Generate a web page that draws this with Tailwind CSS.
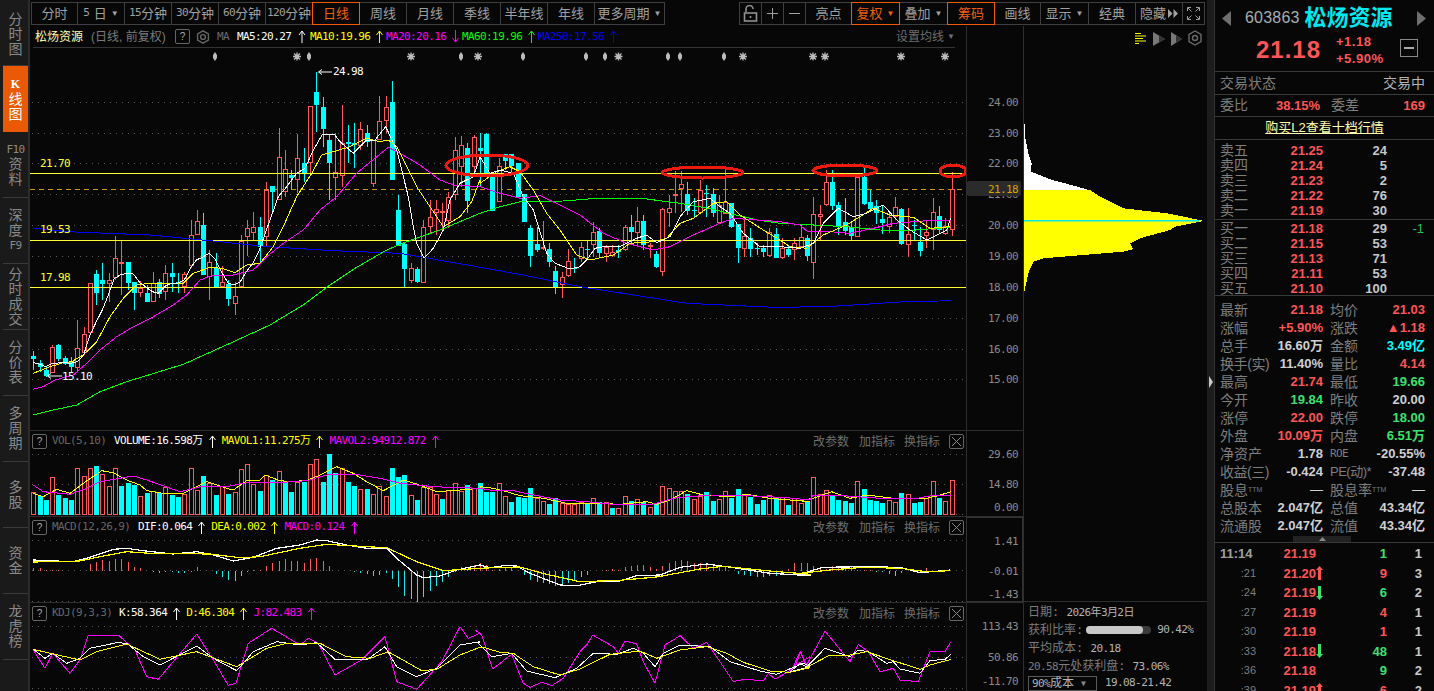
<!DOCTYPE html>
<html lang="zh">
<head>
<meta charset="utf-8">
<script src="https://cdn.jsdelivr.net/npm/@tailwindcss/browser@4"></script>
<title>松炀资源</title>
</head>
<body class="bg-[#070707]">
<div class="flex w-[1434px] h-[691px] overflow-hidden bg-[#070707] text-[#999] font-['Liberation_Sans','Noto_Sans_CJK_SC',sans-serif]">

  <!-- left tab rail -->
  <nav class="w-[30px] flex-none bg-[#1a1a1a] border-r-2 border-[#2c2c2c] pl-[3px] pt-[3px] flex flex-col text-[14px] leading-[15px] text-[#8a8a8a] text-center">
    <div class="h-[63px] w-[25px] border-b border-[#3a3a3a] flex flex-col justify-center"><span>分</span><span>时</span><span>图</span></div>
    <div class="h-[66px] w-[25px] bg-[#ea5a04] text-white flex flex-col justify-center"><span class="text-[12px] font-bold font-['Liberation_Serif']">K</span><span>线</span><span>图</span></div>
    <div class="h-[66px] w-[25px] border-b border-[#3a3a3a] flex flex-col justify-center"><span class="font-['DejaVu_Sans_Mono'] text-[11px] tracking-[-0.6px]">F10</span><span>资</span><span>料</span></div>
    <div class="h-[66px] w-[25px] border-b border-[#3a3a3a] flex flex-col justify-center"><span>深</span><span>度</span><span class="font-['DejaVu_Sans_Mono'] text-[11px] tracking-[-0.6px]">F9</span></div>
    <div class="h-[66px] w-[25px] border-b border-[#3a3a3a] flex flex-col justify-center"><span>分</span><span>时</span><span>成</span><span>交</span></div>
    <div class="h-[66px] w-[25px] border-b border-[#3a3a3a] flex flex-col justify-center"><span>分</span><span>价</span><span>表</span></div>
    <div class="h-[66px] w-[25px] border-b border-[#3a3a3a] flex flex-col justify-center"><span>多</span><span>周</span><span>期</span></div>
    <div class="h-[66px] w-[25px] border-b border-[#3a3a3a] flex flex-col justify-center"><span>多</span><span>股</span></div>
    <div class="h-[66px] w-[25px] border-b border-[#3a3a3a] flex flex-col justify-center"><span>资</span><span>金</span></div>
    <div class="h-[66px] w-[25px] border-b border-[#3a3a3a] flex flex-col justify-center"><span>龙</span><span>虎</span><span>榜</span></div>
  </nav>

  <!-- centre -->
  <main class="w-[1177px] flex-none flex flex-col">
    <!-- toolbar -->
    <div class="h-[26px] flex-none flex items-start pt-[2px] text-[13px] text-[#a0a0a0] pl-[1px] whitespace-nowrap">
      <div class="flex">
        <div class="w-[47px] h-[23px] border border-[#3f3f3f] flex items-center justify-center">分时</div>
        <div class="w-[48px] h-[23px] border border-[#3f3f3f] -ml-px flex items-center justify-center gap-[4px]"><span class="font-['DejaVu_Sans_Mono'] text-[11px]">5</span>日<span class="text-[8px]">▼</span></div>
        <div class="w-[48px] h-[23px] border border-[#3f3f3f] -ml-px flex items-center justify-center"><span class="font-['DejaVu_Sans_Mono'] text-[11px] tracking-[-0.6px]">15</span>分钟</div>
        <div class="w-[48px] h-[23px] border border-[#3f3f3f] -ml-px flex items-center justify-center"><span class="font-['DejaVu_Sans_Mono'] text-[11px] tracking-[-0.6px]">30</span>分钟</div>
        <div class="w-[48px] h-[23px] border border-[#3f3f3f] -ml-px flex items-center justify-center"><span class="font-['DejaVu_Sans_Mono'] text-[11px] tracking-[-0.6px]">60</span>分钟</div>
        <div class="w-[48px] h-[23px] border border-[#3f3f3f] -ml-px flex items-center justify-center"><span class="font-['DejaVu_Sans_Mono'] text-[11px] tracking-[-0.6px]">120</span>分钟</div>
        <div class="w-[48px] h-[23px] border border-[#f05a08] -ml-px relative flex items-center justify-center text-[#f0600c]">日线</div>
        <div class="w-[48px] h-[23px] border border-[#3f3f3f] -ml-px flex items-center justify-center">周线</div>
        <div class="w-[48px] h-[23px] border border-[#3f3f3f] -ml-px flex items-center justify-center">月线</div>
        <div class="w-[48px] h-[23px] border border-[#3f3f3f] -ml-px flex items-center justify-center">季线</div>
        <div class="w-[48px] h-[23px] border border-[#3f3f3f] -ml-px flex items-center justify-center">半年线</div>
        <div class="w-[48px] h-[23px] border border-[#3f3f3f] -ml-px flex items-center justify-center">年线</div>
        <div class="w-[71px] h-[23px] border border-[#3f3f3f] -ml-px flex items-center justify-center gap-[4px]">更多周期<span class="text-[8px]">▼</span></div>
      </div>
      <div class="flex-1"></div>
      <div class="flex mr-[2px]">
        <div class="w-[23px] h-[23px] border border-[#3f3f3f] flex items-center justify-center"><svg width="15" height="17" viewBox="0 0 15 17" fill="none" stroke="#909090" stroke-width="1.6"><path d="M3 7V4a3.5 3.5 0 0 1 7 0"/><rect x="1.5" y="8" width="12" height="8"/><path d="M7.5 11v2"/></svg></div>
        <div class="w-[23px] h-[23px] border border-[#3f3f3f] -ml-px flex items-center justify-center"><svg width="11" height="11" stroke="#a0a0a0"><path d="M0 5.5h11M5.5 0v11"/></svg></div>
        <div class="w-[23px] h-[23px] border border-[#3f3f3f] -ml-px flex items-center justify-center"><svg width="11" height="11" stroke="#a0a0a0"><path d="M0 5.5h11"/></svg></div>
        <div class="w-[47px] h-[23px] border border-[#3f3f3f] -ml-px flex items-center justify-center">亮点</div>
        <div class="w-[49px] h-[23px] border border-[#f05a08] -ml-px relative flex items-center justify-center gap-[4px] text-[#f0600c]">复权<span class="text-[8px]">▼</span></div>
        <div class="w-[49px] h-[23px] border border-[#3f3f3f] -ml-px flex items-center justify-center gap-[4px]">叠加<span class="text-[8px]">▼</span></div>
        <div class="w-[48px] h-[23px] border border-[#f05a08] -ml-px relative flex items-center justify-center text-[#f0600c]">筹码</div>
        <div class="w-[47px] h-[23px] border border-[#3f3f3f] -ml-px flex items-center justify-center">画线</div>
        <div class="w-[49px] h-[23px] border border-[#3f3f3f] -ml-px flex items-center justify-center gap-[4px]">显示<span class="text-[8px]">▼</span></div>
        <div class="w-[48px] h-[23px] border border-[#3f3f3f] -ml-px flex items-center justify-center">经典</div>
        <div class="w-[48px] h-[23px] border border-[#3f3f3f] -ml-px flex items-center justify-center gap-[2px]">隐藏<svg width="10" height="9" fill="#a0a0a0"><path d="M0 0l4.5 4.5L0 9zM5.5 0L10 4.5 5.5 9z"/></svg></div>
        <div class="w-[23px] h-[23px] border border-[#3f3f3f] -ml-px flex items-center justify-center"><svg width="13" height="13" fill="none" stroke="#a0a0a0"><path d="M.5 4V.5H4M9 .5h3.5V4M.5 9v3.5H4M12.5 9v3.5H9M1 1l3.5 3.5M12 1L8.5 4.5M1 12l3.5-3.5M12 12L8.5 8.5"/></svg></div>
      </div>
    </div>

    <div class="flex-1 flex min-h-0">
      <!-- chart column -->
      <div class="w-[993px] flex-none flex flex-col">
        <!-- main panel -->
        <section class="h-[404px] flex">
          <div class="w-[936px] flex-none flex flex-col">
            <div class="h-[22px] flex-none ml-[3px] mr-[11px] border-b border-[#333] flex items-center text-[12px] leading-[14px] whitespace-nowrap">
              <span class="ml-[2px] w-[56px] text-[#ffffb4]">松炀资源</span>
              <span class="w-[84px] text-[#7a7a7a]">(日线, 前复权)</span>
              <span class="w-[15px] h-[15px] border border-[#666] rounded-[2px] flex items-center justify-center text-[#aaa] text-[10px]">?</span>
              <svg class="ml-[6px]" width="14" height="14" viewBox="0 0 14 14" fill="none" stroke="#666" stroke-width="1.4"><path d="M7 .8l5.4 3.1v6.2L7 13.2 1.6 10.100V3.900z"/><circle cx="7" cy="7" r="2.400"/></svg>
              <div class="flex items-center font-['DejaVu_Sans_Mono','Noto_Sans_CJK_SC',monospace] text-[11px] tracking-[-0.6px]">
                <span class="ml-[7px] w-[20px] text-[#6a6a6a]">MA</span>
                <span class="w-[60px] text-white">MA5:20.27</span>
                <svg class="w-[10px] h-[13px] text-white" viewBox="0 0 7 13" fill="none" stroke="currentColor"><path d="M3.500 13V1M.5 5l3-4 3 4"/></svg>
                <span class="ml-[3px] w-[66px] text-[#ffff00]">MA10:19.96</span>
                <svg class="w-[7px] h-[13px] text-[#ffff00]" viewBox="0 0 7 13" fill="none" stroke="currentColor"><path d="M3.500 13V1M.5 5l3-4 3 4"/></svg>
                <span class="ml-[3px] w-[66px] text-[#ff00ff]">MA20:20.16</span>
                <svg class="w-[7px] h-[13px] text-[#ff00ff]" viewBox="0 0 7 13" fill="none" stroke="currentColor"><path d="M3.500 0v12M.5 8l3 4 3-4"/></svg>
                <span class="ml-[3px] w-[66px] text-[#00ff00]">MA60:19.96</span>
                <svg class="w-[7px] h-[13px] text-[#00ff00]" viewBox="0 0 7 13" fill="none" stroke="currentColor"><path d="M3.500 13V1M.5 5l3-4 3 4"/></svg>
                <span class="ml-[3px] w-[72px] text-[#0000ff]">MA250:17.56</span>
                <svg class="w-[7px] h-[13px] text-[#0000ff]" viewBox="0 0 7 13" fill="none" stroke="currentColor"><path d="M3.500 13V1M.5 5l3-4 3 4"/></svg>
              </div>
              <div class="flex-1"></div>
              <span class="text-[#6e6e6e]">设置均线</span><span class="ml-[3px] text-[8px] text-[#6e6e6e]">▼</span>
            </div>
            <svg id="main" class="w-[936px] h-[382px]" viewBox="30 48 936 382"></svg>
          </div>
          <div class="w-[57px] flex-none border-l border-[#2e2e2e]">
            <svg class="w-[56px] h-[404px] font-['DejaVu_Sans_Mono',monospace] text-[11px] tracking-[-0.6px]" viewBox="967 26 56 404" fill="#8a8a8a" text-anchor="end">
              <text x="1018" y="106">24.00</text><text x="1018" y="137">23.00</text><text x="1018" y="167">22.00</text>
              <text x="1018" y="198">21.00</text><text x="1018" y="229">20.00</text><text x="1018" y="260">19.00</text>
              <text x="1018" y="291">18.00</text><text x="1018" y="322">17.00</text><text x="1018" y="353">16.00</text><text x="1018" y="383">15.00</text>
              <rect x="967" y="181" width="54" height="15" rx="2" fill="#2b2b2b"/><text x="1018" y="193" fill="#d9a300">21.18</text>
            </svg>
          </div>
        </section>
        <!-- volume panel -->
        <section class="h-[86px] flex border-t border-[#2e2e2e]">
          <div class="w-[936px] flex-none flex flex-col">
            <div class="h-[21px] flex-none pl-[2px] pr-[2px] flex items-center text-[12px] whitespace-nowrap">
              <span class="w-[15px] h-[15px] border border-[#666] rounded-[2px] flex items-center justify-center text-[#aaa] text-[10px]">?</span>
              <div class="flex items-center font-['DejaVu_Sans_Mono','Noto_Sans_CJK_SC',monospace] text-[11px] tracking-[-0.6px]">
                <span class="ml-[5px] w-[62px] text-[#666]">VOL(5,10)</span>
                <span class="text-white">VOLUME:16.598万</span>
                <svg class="ml-[6px] w-[7px] h-[13px] text-white" viewBox="0 0 7 13" fill="none" stroke="currentColor"><path d="M3.500 13V1M.5 5l3-4 3 4"/></svg>
                <span class="ml-[6px] text-[#ffff00]">MAVOL1:11.275万</span>
                <svg class="ml-[6px] w-[7px] h-[13px] text-[#ffff00]" viewBox="0 0 7 13" fill="none" stroke="currentColor"><path d="M3.500 13V1M.5 5l3-4 3 4"/></svg>
                <span class="ml-[6px] text-[#ff00ff]">MAVOL2:94912.872</span>
                <svg class="ml-[6px] w-[7px] h-[13px] text-[#ff00ff]" viewBox="0 0 7 13" fill="none" stroke="currentColor"><path d="M3.500 13V1M.5 5l3-4 3 4"/></svg>
              </div>
              <div class="flex-1"></div>
              <span class="text-[#6e6e6e]">改参数</span><span class="ml-[10px] text-[#6e6e6e]">加指标</span><span class="ml-[9px] text-[#6e6e6e]">换指标</span>
              <span class="ml-[9px] w-[15px] h-[15px] border border-[#666] rounded-[2px] flex items-center justify-center"><svg width="9" height="9" stroke="#888"><path d="M0 0l9 9M9 0L0 9"/></svg></span>
            </div>
            <svg id="vol" class="w-[936px] h-[64px]" viewBox="30 452 936 64"></svg>
          </div>
          <div class="w-[57px] flex-none border-l border-[#2e2e2e]">
            <svg class="w-[56px] h-[85px] font-['DejaVu_Sans_Mono',monospace] text-[11px] tracking-[-0.6px]" viewBox="967 431 56 85" fill="#8a8a8a" text-anchor="end">
              <text x="1018" y="458">29.60</text><text x="1018" y="488">14.80</text><text x="1018" y="511">0.00</text>
            </svg>
          </div>
        </section>
        <!-- macd panel -->
        <section class="h-[86px] flex border-t border-[#2e2e2e]">
          <div class="w-[936px] flex-none flex flex-col">
            <div class="h-[21px] flex-none pl-[2px] pr-[2px] flex items-center text-[12px] whitespace-nowrap">
              <span class="w-[15px] h-[15px] border border-[#666] rounded-[2px] flex items-center justify-center text-[#aaa] text-[10px]">?</span>
              <div class="flex items-center font-['DejaVu_Sans_Mono','Noto_Sans_CJK_SC',monospace] text-[11px] tracking-[-0.6px]">
                <span class="ml-[5px] w-[86px] text-[#666]">MACD(12,26,9)</span>
                <span class="text-white">DIF:0.064</span>
                <svg class="ml-[6px] w-[7px] h-[13px] text-white" viewBox="0 0 7 13" fill="none" stroke="currentColor"><path d="M3.500 13V1M.5 5l3-4 3 4"/></svg>
                <span class="ml-[6px] text-[#ffff00]">DEA:0.002</span>
                <svg class="ml-[6px] w-[7px] h-[13px] text-[#ffff00]" viewBox="0 0 7 13" fill="none" stroke="currentColor"><path d="M3.500 13V1M.5 5l3-4 3 4"/></svg>
                <span class="ml-[6px] text-[#ff00ff]">MACD:0.124</span>
                <svg class="ml-[6px] w-[7px] h-[13px] text-[#ff00ff]" viewBox="0 0 7 13" fill="none" stroke="currentColor"><path d="M3.500 13V1M.5 5l3-4 3 4"/></svg>
              </div>
              <div class="flex-1"></div>
              <span class="text-[#6e6e6e]">改参数</span><span class="ml-[10px] text-[#6e6e6e]">加指标</span><span class="ml-[9px] text-[#6e6e6e]">换指标</span>
              <span class="ml-[9px] w-[15px] h-[15px] border border-[#666] rounded-[2px] flex items-center justify-center"><svg width="9" height="9" stroke="#888"><path d="M0 0l9 9M9 0L0 9"/></svg></span>
            </div>
            <svg id="macd" class="w-[936px] h-[64px]" viewBox="30 538 936 64"></svg>
          </div>
          <div class="w-[57px] flex-none border border-[#333]">
            <svg class="w-[55px] h-[84px] font-['DejaVu_Sans_Mono',monospace] text-[11px] tracking-[-0.6px]" viewBox="967 517 55 84" fill="#8a8a8a" text-anchor="end">
              <text x="1018" y="544">1.41</text><text x="1018" y="574">-0.01</text><text x="1018" y="597">-1.43</text>
            </svg>
          </div>
        </section>
        <!-- kdj panel -->
        <section class="flex-1 flex border-t border-[#2e2e2e]">
          <div class="w-[936px] flex-none flex flex-col">
            <div class="h-[21px] flex-none pl-[2px] pr-[2px] flex items-center text-[12px] whitespace-nowrap">
              <span class="w-[15px] h-[15px] border border-[#666] rounded-[2px] flex items-center justify-center text-[#aaa] text-[10px]">?</span>
              <div class="flex items-center font-['DejaVu_Sans_Mono','Noto_Sans_CJK_SC',monospace] text-[11px] tracking-[-0.6px]">
                <span class="ml-[5px] w-[67px] text-[#666]">KDJ(9,3,3)</span>
                <span class="text-white">K:58.364</span>
                <svg class="ml-[6px] w-[7px] h-[13px] text-white" viewBox="0 0 7 13" fill="none" stroke="currentColor"><path d="M3.500 13V1M.5 5l3-4 3 4"/></svg>
                <span class="ml-[6px] text-[#ffff00]">D:46.304</span>
                <svg class="ml-[6px] w-[7px] h-[13px] text-[#ffff00]" viewBox="0 0 7 13" fill="none" stroke="currentColor"><path d="M3.500 13V1M.5 5l3-4 3 4"/></svg>
                <span class="ml-[6px] text-[#ff00ff]">J:82.483</span>
                <svg class="ml-[6px] w-[7px] h-[13px] text-[#ff00ff]" viewBox="0 0 7 13" fill="none" stroke="currentColor"><path d="M3.500 13V1M.5 5l3-4 3 4"/></svg>
              </div>
              <div class="flex-1"></div>
              <span class="text-[#6e6e6e]">改参数</span><span class="ml-[10px] text-[#6e6e6e]">加指标</span><span class="ml-[9px] text-[#6e6e6e]">换指标</span>
              <span class="ml-[9px] w-[15px] h-[15px] border border-[#666] rounded-[2px] flex items-center justify-center"><svg width="9" height="9" stroke="#888"><path d="M0 0l9 9M9 0L0 9"/></svg></span>
            </div>
            <svg id="kdj" class="w-[936px] h-[67px]" viewBox="30 624 936 67"></svg>
          </div>
          <div class="w-[57px] flex-none border-l border-[#2e2e2e]">
            <svg class="w-[56px] h-[88px] font-['DejaVu_Sans_Mono',monospace] text-[11px] tracking-[-0.6px]" viewBox="967 603 56 88" fill="#8a8a8a" text-anchor="end">
              <text x="1018" y="630">113.43</text><text x="1018" y="661">50.86</text><text x="1018" y="685">-11.70</text>
            </svg>
          </div>
        </section>
      </div>
      <!-- chip column -->
      <div class="w-[184px] flex-none flex flex-col border-l border-[#2e2e2e]">
        <svg id="chip" class="w-[183px] h-[575px]" viewBox="1024 26 183 575"></svg>
        <div class="flex-1 border-t border-[#2e2e2e] pl-[4px] pt-[1px] text-[12px] leading-[18px] text-[#7c7c7c] font-['DejaVu_Sans_Mono','Noto_Sans_CJK_SC',monospace]">
          <div class="h-[18px]">日期: <span class="text-[#b4b4b4] tracking-[-0.6px] text-[11px]">2026年3月2日</span></div>
          <div class="h-[18px] flex items-center">获利比率:
            <span class="ml-[3px] w-[65px] h-[8px] rounded-full bg-[#3a3a3a] flex"><span class="w-[57px] h-[8px] rounded-full bg-[#c8c8c8]"></span></span>
            <span class="ml-[6px] text-[#b4b4b4] tracking-[-0.6px] text-[11px]">90.42%</span></div>
          <div class="h-[18px]">平均成本: <span class="text-[#b4b4b4] tracking-[-0.6px] text-[11px]">20.18</span></div>
          <div class="h-[18px]"><span class="tracking-[-0.6px] text-[11px]">20.58</span>元处获利盘: <span class="text-[#b4b4b4] tracking-[-0.6px] text-[11px]">73.06%</span></div>
          <div class="h-[16px] flex items-center">
            <span class="w-[69px] h-[15px] border border-[#5a5a5a] flex items-center pl-[3px] text-[#b4b4b4] leading-[13px]"><span class="tracking-[-0.6px] text-[11px]">90%</span>成本<span class="ml-[7px] text-[8px] text-[#888]">▼</span></span>
            <span class="ml-[8px] text-[#b4b4b4] tracking-[-0.6px] text-[11px]">19.08-21.42</span>
          </div>
        </div>
      </div>
    </div>
  </main>

  <!-- splitter -->
  <div class="w-[7px] flex-none bg-[#1c1c1c] relative">
    <svg class="absolute left-[1px] top-[376px]" width="5" height="12" fill="#c8c8c8"><path d="M1 0l4 6-4 6z"/></svg>
  </div>

  <!-- right quote panel -->
  <aside class="w-[220px] flex-none border-l border-[#333] flex flex-col text-[14px] text-[#7e7e7e] font-['Liberation_Sans','Noto_Sans_CJK_SC',sans-serif]">
    <div class="h-[72px] flex-none border-b border-[#3a3a3a] flex flex-col">
      <div class="h-[36px] flex items-center pl-[7px] pr-[8px]">
        <svg width="9" height="15" fill="#6e6e6e"><path d="M9 0v15L0 7.500z"/></svg>
        <span class="ml-[14px] text-[16px] tracking-[0.2px] text-[#a5aeb0]">603863</span>
        <span class="ml-[5px] text-[22px] leading-[24px] font-bold text-[#00e8f0]">松炀资源</span>
        <div class="flex-1"></div>
        <svg width="9" height="15" fill="#6e6e6e"><path d="M0 0v15l9-7.500z"/></svg>
      </div>
      <div class="flex items-start">
        <span class="ml-[41px] w-[80px] text-[24px] leading-[28px] font-bold tracking-[1px] text-[#ff5555]">21.18</span>
        <div class="text-[13px] leading-[17px] font-bold tracking-[0.5px] text-[#ff5555] -mt-[3px]"><div>+1.18</div><div>+5.90%</div></div>
        <span class="ml-[17px] mt-[3px] w-[18px] h-[18px] border border-[#8a8a8a] flex items-center justify-center"><svg width="10" height="2" fill="#aaa"><rect width="10" height="2"/></svg></span>
      </div>
    </div>
    <div class="h-[23px] flex-none border-b border-[#3a3a3a] px-[5px] flex items-center justify-between"><span>交易状态</span><span class="text-[#b4b4b4] mr-[4px]">交易中</span></div>
    <div class="h-[22px] flex-none border-b border-[#3a3a3a] pl-[5px] pr-[9px] flex items-center"><span class="w-[56px]">委比</span><span class="w-[48px] text-[13px] font-bold text-[#ff5555]">38.15%</span><span class="ml-[7px]">委差</span><span class="flex-1 text-right text-[13px] font-bold text-[#ff5555]">169</span></div>
    <div class="h-[23px] flex-none border-b border-[#3a3a3a] flex items-center justify-center text-[13px] text-[#ffffb0] underline">购买L2查看十档行情</div>
    <div class="h-[80px] flex-none border-b border-[#3a3a3a] pt-[3px] pl-[5px] text-[13px] leading-[15px] font-bold">
      <div class="h-[15px] flex"><span class="w-[68px] text-[14px] font-normal">卖五</span><span class="w-[35px] text-right text-[#ff5555]">21.25</span><span class="w-[64px] text-right text-[#c8c8c8]">24</span></div>
      <div class="h-[15px] flex"><span class="w-[68px] text-[14px] font-normal">卖四</span><span class="w-[35px] text-right text-[#ff5555]">21.24</span><span class="w-[64px] text-right text-[#c8c8c8]">5</span></div>
      <div class="h-[15px] flex"><span class="w-[68px] text-[14px] font-normal">卖三</span><span class="w-[35px] text-right text-[#ff5555]">21.23</span><span class="w-[64px] text-right text-[#c8c8c8]">2</span></div>
      <div class="h-[15px] flex"><span class="w-[68px] text-[14px] font-normal">卖二</span><span class="w-[35px] text-right text-[#ff5555]">21.22</span><span class="w-[64px] text-right text-[#c8c8c8]">76</span></div>
      <div class="h-[15px] flex"><span class="w-[68px] text-[14px] font-normal">卖一</span><span class="w-[35px] text-right text-[#ff5555]">21.19</span><span class="w-[64px] text-right text-[#c8c8c8]">30</span></div>
    </div>
    <div class="h-[76px] flex-none border-b border-[#3a3a3a] pt-[1px] pl-[5px] text-[13px] leading-[15px] font-bold">
      <div class="h-[15px] flex"><span class="w-[68px] text-[14px] font-normal">买一</span><span class="w-[35px] text-right text-[#ff5555]">21.18</span><span class="w-[64px] text-right text-[#c8c8c8]">29</span><span class="w-[37px] text-right font-normal text-[#1ec85a]">-1</span></div>
      <div class="h-[15px] flex"><span class="w-[68px] text-[14px] font-normal">买二</span><span class="w-[35px] text-right text-[#ff5555]">21.15</span><span class="w-[64px] text-right text-[#c8c8c8]">53</span></div>
      <div class="h-[15px] flex"><span class="w-[68px] text-[14px] font-normal">买三</span><span class="w-[35px] text-right text-[#ff5555]">21.13</span><span class="w-[64px] text-right text-[#c8c8c8]">71</span></div>
      <div class="h-[15px] flex"><span class="w-[68px] text-[14px] font-normal">买四</span><span class="w-[35px] text-right text-[#ff5555]">21.11</span><span class="w-[64px] text-right text-[#c8c8c8]">53</span></div>
      <div class="h-[15px] flex"><span class="w-[68px] text-[14px] font-normal">买五</span><span class="w-[35px] text-right text-[#ff5555]">21.10</span><span class="w-[64px] text-right text-[#c8c8c8]">100</span></div>
    </div>
    <!-- stats -->
    <div class="h-[246px] flex-none pt-[5px] pl-[5px] text-[13px] font-bold leading-[18px]">
      <div class="h-[18px] flex"><div class="w-[103px] flex justify-between"><span class="text-[14px] font-normal">最新</span><span class="text-[#ff5555]">21.18</span></div><div class="w-[95px] ml-[7px] flex justify-between"><span class="text-[14px] font-normal">均价</span><span class="text-[#ff5555]">21.03</span></div></div>
      <div class="h-[18px] flex"><div class="w-[103px] flex justify-between"><span class="text-[14px] font-normal">涨幅</span><span class="text-[#ff5555]">+5.90%</span></div><div class="w-[95px] ml-[7px] flex justify-between"><span class="text-[14px] font-normal">涨跌</span><span class="text-[#ff5555]">▲1.18</span></div></div>
      <div class="h-[18px] flex"><div class="w-[103px] flex justify-between"><span class="text-[14px] font-normal">总手</span><span class="text-[#d0d0d0]">16.60万</span></div><div class="w-[95px] ml-[7px] flex justify-between"><span class="text-[14px] font-normal">金额</span><span class="text-[#00ffff]">3.49亿</span></div></div>
      <div class="h-[18px] flex"><div class="w-[103px] flex justify-between"><span class="text-[14px] font-normal whitespace-nowrap tracking-[-0.4px]">换手(实)</span><span class="text-[#d0d0d0] -ml-[6px]">11.40%</span></div><div class="w-[95px] ml-[7px] flex justify-between"><span class="text-[14px] font-normal">量比</span><span class="text-[#ff5555]">4.14</span></div></div>
      <div class="h-[18px] flex"><div class="w-[103px] flex justify-between"><span class="text-[14px] font-normal">最高</span><span class="text-[#ff5555]">21.74</span></div><div class="w-[95px] ml-[7px] flex justify-between"><span class="text-[14px] font-normal">最低</span><span class="text-[#3ee06e]">19.66</span></div></div>
      <div class="h-[18px] flex"><div class="w-[103px] flex justify-between"><span class="text-[14px] font-normal">今开</span><span class="text-[#3ee06e]">19.84</span></div><div class="w-[95px] ml-[7px] flex justify-between"><span class="text-[14px] font-normal">昨收</span><span class="text-[#d0d0d0]">20.00</span></div></div>
      <div class="h-[18px] flex"><div class="w-[103px] flex justify-between"><span class="text-[14px] font-normal">涨停</span><span class="text-[#ff5555]">22.00</span></div><div class="w-[95px] ml-[7px] flex justify-between"><span class="text-[14px] font-normal">跌停</span><span class="text-[#3ee06e]">18.00</span></div></div>
      <div class="h-[18px] flex"><div class="w-[103px] flex justify-between"><span class="text-[14px] font-normal">外盘</span><span class="text-[#ff5555]">10.09万</span></div><div class="w-[95px] ml-[7px] flex justify-between"><span class="text-[14px] font-normal">内盘</span><span class="text-[#3ee06e]">6.51万</span></div></div>
      <div class="h-[18px] flex"><div class="w-[103px] flex justify-between"><span class="text-[14px] font-normal">净资产</span><span class="text-[#d0d0d0]">1.78</span></div><div class="w-[95px] ml-[7px] flex justify-between"><span class="font-['DejaVu_Sans_Mono'] text-[11px] tracking-[-0.6px] font-normal">ROE</span><span class="text-[#d0d0d0]">-20.55%</span></div></div>
      <div class="h-[18px] flex"><div class="w-[103px] flex justify-between"><span class="text-[14px] font-normal tracking-[-0.5px] whitespace-nowrap">收益(三)</span><span class="text-[#d0d0d0]">-0.424</span></div><div class="w-[95px] ml-[7px] flex justify-between"><span class="text-[13px] font-normal tracking-[-0.5px] whitespace-nowrap">PE(动)*</span><span class="text-[#d0d0d0]">-37.48</span></div></div>
      <div class="h-[18px] flex"><div class="w-[103px] flex justify-between"><span class="text-[14px] font-normal">股息<sup class="text-[7px] text-[#6a7a80]">TTM</sup></span><span class="font-normal text-[#d0d0d0]">—</span></div><div class="w-[95px] ml-[7px] flex justify-between"><span class="text-[14px] font-normal">股息率<sup class="text-[7px] text-[#6a7a80]">TTM</sup></span><span class="font-normal text-[#d0d0d0]">—</span></div></div>
      <div class="h-[18px] flex"><div class="w-[103px] flex justify-between"><span class="text-[14px] font-normal">总股本</span><span class="text-[#d0d0d0]">2.047亿</span></div><div class="w-[95px] ml-[7px] flex justify-between"><span class="text-[14px] font-normal">总值</span><span class="text-[#d0d0d0]">43.34亿</span></div></div>
      <div class="h-[18px] flex"><div class="w-[103px] flex justify-between"><span class="text-[14px] font-normal">流通股</span><span class="text-[#d0d0d0]">2.047亿</span></div><div class="w-[95px] ml-[7px] flex justify-between"><span class="text-[14px] font-normal">流值</span><span class="text-[#d0d0d0]">43.34亿</span></div></div>
    </div>
    <!-- ticks -->
    <div class="flex-1 border-t border-[#3a3a3a] relative pt-[1px] pl-[5px] text-[13px] font-bold leading-[19.5px]">
      <div class="absolute left-[78px] -top-[7px] w-[58px] h-[6px] bg-[#222] flex items-center justify-center"><svg width="7" height="4" fill="#888"><path d="M3.500 0L7 4H0z"/></svg></div>
      <div class="h-[19.500px] flex"><span class="w-[36px] text-[#a0a0a0]">11:14</span><span class="w-[60px] text-right text-[#ff5555]">21.19</span><span class="w-[8px]"></span><span class="w-[63px] text-right text-[#3ee06e]">1</span><span class="w-[35px] text-right text-[#c8c8c8]">1</span></div>
      <div class="h-[19.500px] flex"><span class="w-[36px] text-right text-[11px] font-normal">:21</span><span class="w-[60px] text-right text-[#ff5555]">21.20</span><span class="w-[8px] text-[#ff5555] flex items-center"><svg width="7" height="14" fill="currentColor"><path d="M3.500 0L7 4H5v10H2V4H0z"/></svg></span><span class="w-[63px] text-right text-[#ff5555]">9</span><span class="w-[35px] text-right text-[#c8c8c8]">3</span></div>
      <div class="h-[19.500px] flex"><span class="w-[36px] text-right text-[11px] font-normal">:24</span><span class="w-[60px] text-right text-[#ff5555]">21.19</span><span class="w-[8px] text-[#3ee06e] flex items-center"><svg width="7" height="14" fill="currentColor"><path d="M3.500 14L7 10H5V0H2v10H0z"/></svg></span><span class="w-[63px] text-right text-[#3ee06e]">6</span><span class="w-[35px] text-right text-[#c8c8c8]">2</span></div>
      <div class="h-[19.500px] flex"><span class="w-[36px] text-right text-[11px] font-normal">:27</span><span class="w-[60px] text-right text-[#ff5555]">21.19</span><span class="w-[8px]"></span><span class="w-[63px] text-right text-[#ff5555]">4</span><span class="w-[35px] text-right text-[#c8c8c8]">1</span></div>
      <div class="h-[19.500px] flex"><span class="w-[36px] text-right text-[11px] font-normal">:30</span><span class="w-[60px] text-right text-[#ff5555]">21.19</span><span class="w-[8px]"></span><span class="w-[63px] text-right text-[#ff5555]">1</span><span class="w-[35px] text-right text-[#c8c8c8]">1</span></div>
      <div class="h-[19.500px] flex"><span class="w-[36px] text-right text-[11px] font-normal">:33</span><span class="w-[60px] text-right text-[#ff5555]">21.18</span><span class="w-[8px] text-[#3ee06e] flex items-center"><svg width="7" height="14" fill="currentColor"><path d="M3.500 14L7 10H5V0H2v10H0z"/></svg></span><span class="w-[63px] text-right text-[#3ee06e]">48</span><span class="w-[35px] text-right text-[#c8c8c8]">1</span></div>
      <div class="h-[19.500px] flex"><span class="w-[36px] text-right text-[11px] font-normal">:36</span><span class="w-[60px] text-right text-[#ff5555]">21.18</span><span class="w-[8px]"></span><span class="w-[63px] text-right text-[#3ee06e]">9</span><span class="w-[35px] text-right text-[#c8c8c8]">2</span></div>
      <div class="h-[19.500px] flex"><span class="w-[36px] text-right text-[11px] font-normal">:39</span><span class="w-[60px] text-right text-[#ff5555]">21.19</span><span class="w-[8px] text-[#ff5555] flex items-center"><svg width="7" height="14" fill="currentColor"><path d="M3.500 0L7 4H5v10H2V4H0z"/></svg></span><span class="w-[63px] text-right text-[#ff5555]">6</span><span class="w-[35px] text-right text-[#c8c8c8]">2</span></div>
    </div>
  </aside>
</div>

<script>
const RED='#ff5a5a',CY='#00ffff',BG='#070707';
const X=i=>Math.round(33.3+6.29*i);
const M={z1:(x,y)=>[x/3,y/3],z2:(x,y)=>[480+x/3,y/3],z6:(x,y)=>[x/3,230+y/3],z7:(x,y)=>[x/3,460+y/3],z8:(x,y)=>[780+x/3,430+y/3],z9:(x,y)=>[480+x/3,130+y/3],z10:(x,y)=>[470+x/3,445+y/3],z3:(x,y)=>[950+x/3,y/3],z11:(x,y)=>[1000+x/3,130+y/3]};
const pts=segs=>segs.map(([m,s])=>s.trim().split(/\s+/).map(p=>{const [a,b]=p.split(',').map(Number);return M[m](a,b).map(v=>v.toFixed(1)).join(',')}).join(' ')).join(' ');
const pl=(c,segs,w=1)=>`<polyline fill="none" stroke="${c}" stroke-width="${w}" stroke-linejoin="round" shape-rendering="crispEdges" points="${pts(segs)}"/>`;
const dots=(y,x2=966)=>`<line x1="32" x2="${x2}" y1="${y}.5" y2="${y}.5" stroke="#5a5a5a" stroke-dasharray="1 5"/>`;
const hl=(y,c)=>`<line x1="30" x2="966" y1="${y}" y2="${y}" stroke="${c}" stroke-width="1"/>`;

/* main candles: colour high bodyTop bodyBottom low */
const C=`c 351 356 359 370,c 360 363 367 372,c 366 370 376 377,r 345 347 373 373,c 344 345 359 361,c 356 358 364 365,c 357 361 367 372,r 320 348 368 372,r 327 334 353 355,r 283 283 333 333,c 270 274 293 305,c 263 280 284 300,r 273 280 284 302,r 236 258 278 280,r 241 262 263 295,c 262 262 283 290,c 282 282 293 310,r 281 288 293 297,c 285 293 302 302,r 272 283 302 302,c 279 282 294 298,r 265 273 292 300,c 263 273 277 292,c 273 282 284 293,r 272 274 287 293,r 220 235 266 268,r 210 221 235 235,c 213 225 275 275,r 250 262 277 300,c 253 268 287 287,r 266 282 287 287,c 280 284 299 306,r 282 296 304 315,r 235 241 287 287,r 220 228 237 256,r 212 227 233 241,c 217 227 247 263,r 182 190 237 247,c 186 186 192 213,r 128 157 200 200,r 150 169 192 197,c 170 175 178 189,r 134 158 180 193,c 148 163 173 182,r 106 106 163 175,c 72 92 105 132,c 97 107 129 147,c 135 140 163 200,r 133 172 178 200,r 105 143 176 187,c 125 142 144 163,c 123 143 145 168,r 122 129 146 150,c 125 133 142 147,r 140 140 184 187,r 96 121 140 140,r 96 107 121 133,c 81 102 180 180,c 195 210 246 246,c 243 244 269 287,r 263 268 281 283,c 267 269 282 283,r 220 227 283 283,r 200 217 227 233,r 200 209 213 235,r 203 211 212 232,r 192 197 221 228,r 137 150 195 200,r 136 145 167 187,c 143 148 201 213,r 135 137 167 177,c 133 148 151 187,c 133 134 175 175,c 175 177 211 211,r 158 166 202 202,c 154 154 161 170,c 154 154 166 173,c 163 163 197 198,c 194 194 222 222,c 225 228 256 267,c 227 244 250 252,r 221 247 249 250,c 243 249 262 267,c 266 271 287 294,r 272 277 285 298,r 249 261 276 277,c 258 268 269 273,r 242 247 259 262,c 240 249 250 260,r 222 232 245 257,c 228 231 253 258,r 245 247 254 262,r 245 252 256 257,c 245 250 252 258,r 225 227 250 251,c 215 227 232 243,r 207 221 233 245,c 215 221 245 250,r 243 245 247 258,c 251 254 267 268,r 208 209 272 276,r 195 208 213 227,r 171 194 195 213,r 171 184 189 212,c 182 194 211 215,c 198 210 211 217,r 180 190 213 213,c 185 193 194 217,c 188 194 213 217,r 195 205 223 223,r 170 202 214 214,c 203 203 227 228,c 224 224 248 263,r 218 236 249 257,c 228 238 249 257,c 243 248 249 255,c 245 248 252 257,r 228 232 256 257,c 228 234 258 258,r 238 248 258 259,c 245 249 255 257,r 238 243 250 260,r 225 237 247 248,c 235 238 256 261,r 197 214 263 279,r 205 214 217 240,r 170 182 205 206,c 170 182 206 210,c 202 205 226 235,c 198 222 231 235,c 223 227 236 240,r 177 177 237 237,c 167 177 204 205,c 190 202 209 210,c 200 206 213 224,c 205 219 223 234,r 213 217 227 233,r 197 207 217 220,c 208 209 244 245,r 208 234 245 257,c 220 225 226 240,c 227 242 251 256,r 220 232 236 248,r 198 212 230 250,c 206 216 230 233,r 218 226 234 235,r 172 189 230 236`.split(',').map(s=>s.split(' '));

let m='';
[102,133,163,194,225,256,318,349,379].forEach(y=>m+=dots(y));
m+=`<line x1="30" x2="966" y1="189.500" y2="189.500" stroke="#c99a10" stroke-dasharray="5 4"/>`;
C.forEach((d,i)=>{const x=X(i),[hi,t,b,lo]=d.slice(1).map(Number),col=d[0]=='r'?RED:CY;
  m+=`<line x1="${x+.5}" x2="${x+.5}" y1="${hi}" y2="${lo}" stroke="${col}" shape-rendering="crispEdges"/>`;
  if(d[0]=='r') m+=`<rect x="${x-1.5}" y="${t+.5}" width="4" height="${Math.max(b-t-1,1)}" fill="${BG}" stroke="${col}" shape-rendering="crispEdges"/>`;
  else m+=`<rect x="${x-2}" y="${t}" width="5" height="${Math.max(b-t,1)}" fill="${col}" shape-rendering="crispEdges"/>`;
});
m+=hl(173.5,'#ffff33')+hl(240.5,'#ffff33')+hl(287.5,'#ffff33');
m+=pl('#0000ff',[['z6','100,-6 200,5 450,15 660,35 800,50 1000,62 1200,70 1440,112'],['z9','130,435 300,470 620,520 880,532 1040,530 1260,516 1412,512']]);
m+=pl('#00ff00',[['z6','100,555 160,540 230,525 300,485 380,455 550,403 690,340 810,285 910,225 980,172 1070,112 1160,60 1220,35 1320,0'],['z1','1320,690 1440,640'],['z9','0,250 60,230 120,215 250,213 350,205 500,207 600,220 700,238 830,270 900,280 1100,290 1200,300 1280,302 1410,292']]);
m+=pl('#ff00ff',[['z6','100,478 130,470 165,450 220,435 260,400 300,360 350,320 400,290 460,260 520,225 560,195 600,150 640,135 700,135 760,120 800,80 850,40 910,0'],['z1','910,690 960,630 1010,590 1070,520 1130,470 1165,442 1200,460 1260,495 1320,540 1360,555 1440,560'],['z9','0,170 60,190 120,205 180,197 240,225 300,255 370,310 440,340 520,360 570,350 640,315 720,280 760,265 830,270 900,275 960,285 980,303 1050,305 1110,310 1180,295 1240,280 1340,272 1410,270']]);
m+=pl('#ffff00',[['z6','100,430 150,410 190,398 215,395 250,375 290,335 330,260 370,205 410,165 450,160 520,160 550,160 580,130 630,112 665,115 705,128 740,105 780,100 820,50 845,0'],['z1','845,690 890,590 935,520 965,465 1000,455 1050,440 1100,415 1140,425 1165,420 1190,440 1250,560 1330,680 1380,650 1415,605 1440,540'],['z9','0,160 50,125 90,110 120,125 160,180 200,250 240,300 290,375 330,390 400,375 450,340 520,335 560,325 600,280 640,265 700,220 740,215 780,255 850,300 900,330 930,350 980,355 1030,315 1100,285 1180,235 1230,255 1300,262 1350,295 1410,290']]);
m+=pl('#ffffff',[['z6','100,398 118,402 136,410 157,400 193,398 211,400 232,395 250,378 268,320 289,275 307,240 325,195 343,145 361,135 382,130 400,132 421,160 439,172 457,185 475,190 496,168 514,160 532,160 553,150 571,115 589,90 607,82 628,70 646,88 664,125 685,160 703,165 721,155 739,125 760,98 778,60'],['z1','835,590 860,560 890,520 915,505 940,450 968,402 1005,405 1020,425 1060,460 1100,420 1125,420 1157,380 1190,450 1225,590 1240,680'],['z6','1250,40 1272,85 1300,55 1330,0'],['z1','1350,600 1380,550 1420,530 1440,470'],['z2','30,520 60,510 100,520'],['z9','130,200 160,240 200,370 225,400 270,417 300,410 320,390 345,355 370,350 420,350 470,325 500,315 530,338 570,320 600,260 640,215 690,205 720,230 750,250 790,310 840,350 900,350 960,355 1000,340 1030,280 1075,235 1120,260 1160,250 1210,225 1250,270 1290,300 1340,330 1400,300 1412,265']]);
/* red hand-drawn ellipses */
[[487,165.500,41,10.500],[702.500,172.500,40,5.500],[845,170.500,32,5.500],[953,171,13,6]].forEach(e=>m+=`<ellipse cx="${e[0]}" cy="${e[1]}" rx="${e[2]}" ry="${e[3]}" fill="none" stroke="#ee1a10" stroke-width="3" shape-rendering="crispEdges"/>`);
/* marks row */
[[215,0],[297,1],[309,0],[411,1],[461,0],[478,1],[523,0],[586,0],[605,0],[618.500,1],[668,0],[680,0],[724,0],[743,1],[813,1],[825,1],[901,1],[945,1]].forEach(([x,t])=>{
  m+= t? `<g stroke="#bbb" stroke-width="1.300"><path d="M${x-4} 56.500h8M${x} 52.500v8M${x-3} 53.500l6 6M${x+3} 53.500l-6 6"/></g><circle cx="${x}" cy="56.500" r="2.300" fill="#bbb"/>`
       : `<path d="M${x} 52l2 3v3l-2 3-2-3v-3z" fill="#bbb"/>`;
});
const lab=(x,y,t,c)=>`<text x="${x}" y="${y}" fill="${c}" font-family="DejaVu Sans Mono" font-size="11" letter-spacing="-0.6">${t}</text>`;
m+=lab(40,167,'21.70','#ffff33')+lab(40,233,'19.53','#ffff33')+lab(40,281,'17.98','#ffff33');
m+=`<path d="M332 72h-13M322 69.500l-3.500 2.500 3.500 2.500M62 376H48M51 373.500l-3.500 2.500 3.500 2.500" fill="none" stroke="#fff"/>`;
m+=lab(333,75,'24.98','#fff')+lab(62,380,'15.10','#fff');
document.getElementById('main').innerHTML=m;

/* volume */
const V0='r97 c108 c120 r52 c105 c114 c120 r25 r48 r25 c18 r42 r78 r25 c78 c70 c75 r107 c100 r92 c98 r82 c105 c110 r103 r25 r90 c48 r70 c105 r78 c102 r97 r28 r12 r72 c92 r45 c60 r33 c62 c96 r65 c67 r12 r-2 c65 c-18 c38 r25 c65 c78 r88 c88 r102 r78 r108 c25 c50 c45 r105 c120 r80 r80 r102 c117 r90 r70 r92 c75'.split(' ');
const V1='r130 c114 c140 c140 r115 r153 c170 c155 c160 c128 r160 r168 c177 c160 r175 r178 r178 r172 c178 r160 c172 r172 c188 r190 r153 c168 r162 c172 r187 c178 r123 r130 r138 r138 c148 r163 r153 c141 c167 r163 r138 c158 c132 r150 c155 c177 c165 r150 c155 r155 c180 r160 r175 c168'.split(' ');
const V2='r142 r192 r180 c195 c210 c213 c218 r153 c177 c210 c213 c218 r210 r215 c188 r192 c218 c215 r205 r153 c203 r213 r150'.split(' ');
let v=dots(454)+dots(484)+dots(514);
const bars=[...V0.map(s=>[s[0],460+ +s.slice(1)/3]),...V1.map(s=>[s[0],445+ +s.slice(1)/3]),...V2.map(s=>[s[0],430+ +s.slice(1)/3])];
bars.forEach(([c,t],i)=>{const x=X(i);t=Math.round(t);
  v+= c=='r'? `<rect x="${x-1.5}" y="${t+.5}" width="4" height="${514-t}" fill="${BG}" stroke="${RED}" shape-rendering="crispEdges"/>`
            : `<rect x="${x-2}" y="${t}" width="5" height="${515-t}" fill="${CY}" shape-rendering="crispEdges"/>`;
});
v+=pl('#ffff00',[['z7','100,100 130,110 170,88 210,100 250,70 305,32 340,38 380,60 420,75 440,92 490,100 550,100 620,65 680,85 700,90 740,62 780,60 795,45 840,62 880,65 925,60 960,45 1010,20 1060,40 1100,65 1150,92 1210,60 1250,72 1310,95 1380,90 1440,85'],['z10','30,125 70,130 110,140 150,152 220,160 300,177 380,175 450,178 530,170 560,178 600,165 650,137 700,150 780,155 830,148 900,160 1020,170'],['z8','60,212 100,205 155,185 210,205 260,195 340,205 440,205 470,198 514,185']]);
v+=pl('#ff00ff',[['z7','100,75 130,95 210,103 260,85 300,65 400,48 440,60 540,95 600,80 680,80 740,68 830,68 920,62 980,45 1060,42 1140,55 1200,70 1300,80 1440,85'],['z10','60,135 120,135 180,148 270,165 350,170 430,178 550,177 620,158 720,150 830,152 950,158 1020,165'],['z8','100,195 200,198 300,205 400,207 450,198 514,195']]);
document.getElementById('vol').innerHTML=v;

/* macd: height in zoom pixels, negative = up/red, positive = down/cyan */
const H=[-8,-8,-3,-2,-3,0,0,0,0,-20,-27,-32,-30,-35,-35,-25,-12,-8,0,3,8,5,5,8,8,5,-10,0,0,10,18,28,30,15,3,-2,-3,-15,-22,-30,-35,-28,-28,-22,-35,-37,-30,-13,0,0,2,5,7,10,15,12,7,25,50,75,85,93,78,60,45,35,20,5,-12,-6,
-18,-22,-18,-2,-5,-8,-8,0,12,28,35,38,40,45,45,38,30,18,12,0,0,-1,-4,-3,-12,-15,-18,-17,-12,-5,-15,-22,-28,-33,-28,-24,-24,-22,-18,-15,-12,0,10,12,15,18,18,15,15,12,-5,-22,-24,-22,-15,-10,-5,-15,-15,-12,-10,-3,-3,-2,4,5,10,15,8,2,3,3,-8];
let d=dots(540)+`<line x1="32" x2="966" y1="570.500" y2="570.500" stroke="#5a5a5a" stroke-dasharray="1 5"/>`+dots(601);
H.forEach((h,i)=>{if(!h)return;const x=X(i)+.5;d+=`<line x1="${x}" x2="${x}" y1="570.500" y2="${570.5+h/3}" stroke="${h<0?RED:'#22e6ee'}" shape-rendering="crispEdges"/>`});
d+=pl('#ffffff',[['z7','100,300 220,305 260,295 340,268 380,265 430,272 520,282 590,275 640,285 700,303 760,292 830,265 900,255 950,240 980,242 1040,255 1100,265 1160,265 1190,295 1250,345 1270,353 1320,348 1370,330 1440,315'],['z10','30,360 60,368 100,362 140,363 180,385 270,420 320,422 390,408 450,408 500,392 570,390 630,367 710,357 790,368 900,385 1020,392'],['z8','60,432 130,412 250,410 360,412 420,428 510,420']],1.200);
d+=pl('#ffff00',[['z7','100,306 240,303 300,290 380,275 450,280 630,282 720,293 780,290 900,265 980,253 1100,260 1160,263 1250,305 1330,332 1440,325'],['z10','70,368 150,366 230,388 330,410 450,406 560,396 690,372 760,364 900,378 1020,388'],['z8','60,430 150,420 250,412 360,415 440,425 510,422']],1.200);
document.getElementById('macd').innerHTML=d;

/* kdj */
let k=dots(626)+dots(657)+dots(688);
k+=pl('#ff00ff',[['z7','100,570 135,625 158,580 210,640 240,600 265,525 355,525 405,570 440,650 475,658 590,522 640,600 685,676 708,670 745,550 815,505 900,555 925,535 955,550 1005,645 1085,600 1155,530 1190,665 1250,688 1325,605 1380,500 1405,535 1440,520'],['z10','15,555 35,570 68,672 125,628 160,715 180,727 215,712 245,722 280,700 330,620 350,600 368,570 430,605 445,625 465,588 500,597 520,650 555,715 585,600 630,572 670,610 710,592 750,650 790,710 825,702 880,708 895,685 915,702 950,683 975,665 992,620 1010,665 1020,635'],['z8','40,710 60,665 80,705 135,603 210,695 235,643 265,665 300,725 340,715 360,750 415,755 450,665 495,665 512,635']]);
k+=pl('#ffffff',[['z7','100,568 135,595 158,580 200,610 240,595 270,565 350,548 380,550 430,590 480,615 590,558 640,595 710,632 760,575 830,545 900,555 950,548 1005,598 1100,600 1155,560 1190,620 1250,650 1310,625 1380,555 1440,545'],['z10','25,595 65,635 125,625 170,678 255,698 320,670 370,625 440,628 490,610 520,625 555,665 580,625 630,600 720,605 780,650 870,678 920,688 1000,655 1020,665'],['z8','30,725 60,700 80,710 135,655 210,680 235,660 265,665 320,700 340,695 360,717 420,730 450,692 495,688 514,672']]);
k+=pl('#ffff00',[['z7','100,568 160,582 240,600 290,575 380,552 480,598 590,575 710,620 800,565 860,550 960,550 1040,590 1110,595 1165,575 1265,632 1310,628 1380,585 1440,562'],['z10','40,607 90,622 130,625 190,665 270,690 330,672 420,628 510,618 560,640 630,615 710,605 770,625 820,652 900,678 960,682 1020,668'],['z8','80,712 150,675 210,675 260,665 340,692 420,718 450,705 514,688']]);
document.getElementById('kdj').innerHTML=k;

/* chip distribution */
let c=`<polygon fill="#fff" shape-rendering="crispEdges" points="${pts([['z3','222,332 225,410 235,460 245,490 243,515 300,538 400,565 420,571 222,571']])}"/>`;
c+=`<polygon fill="#ffff00" shape-rendering="crispEdges" points="${pts([['z11','72,180 270,180 300,200 370,235 500,250 560,262 612,273 525,290 510,300 420,325 390,340 400,358 370,365 130,385 100,395 85,430 72,490']])}"/>`;
c+=`<rect x="1024" y="220" width="175" height="1.500" fill="#00e8f0"/>`;
c+=`<path d="M1135 33.500h6M1135 36h11M1135 38.500h8M1135 41h11M1135 43.500h4" stroke="#ffff00"/>`;
c+=`<path d="M1153 32l12 7-12 7z" fill="#777"/><path d="M1159 35.500v7l6-3.500z" fill="#333"/><path d="M1171 32l11 7-11 7z" fill="#777"/><path d="M1176 35.500v7l6-3.500z" fill="#333"/>`;
c+=`<path d="M1195 31l6 3.500v7l-6 3.500-6-3.500v-7z" fill="none" stroke="#6a6a6a" stroke-width="1.400"/><circle cx="1195" cy="38" r="2.500" fill="none" stroke="#6a6a6a" stroke-width="1.400"/>`;
document.getElementById('chip').innerHTML=c;
</script>
</body>
</html>
